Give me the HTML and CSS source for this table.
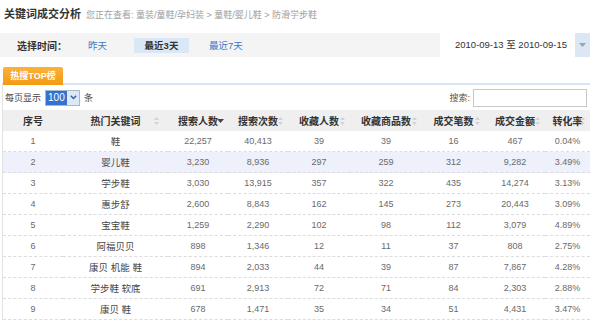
FILE: index.html
```html
<!DOCTYPE html>
<html lang="zh-CN">
<head>
<meta charset="utf-8">
<title>关键词成交分析</title>
<link rel="stylesheet" href="styles.css">
</head>
<body>
<div class="page">
  <div class="title">关键词成交分析<span class="crumb">您正在查看: 童装/童鞋/孕妇装 &gt; 童鞋/婴儿鞋 &gt; 防滑学步鞋</span></div>
  <div class="filter">
    <span class="flabel">选择时间：</span>
    <span class="flink">昨天</span>
    <span class="factive">最近3天</span>
    <span class="flink">最近7天</span>
    <div class="date">
      <span class="date-text">2010-09-13 至 2010-09-15</span>
      <span class="date-arrow"><svg width="7" height="4" viewBox="0 0 7 4"><path d="M0 0h7L3.5 4z" fill="#9aa3ad"/></svg></span>
    </div>
  </div>
  <div class="tabs"><span class="tab">热搜TOP榜</span></div>
  <div class="panel">
    <div class="toolbar">
      <div class="perpage">每页显示
        <span class="select"><span class="sel-val">100</span><span class="sel-arrow"><svg width="7" height="5" viewBox="0 0 7 5"><path d="M0.8 0.8L3.5 3.6L6.2 0.8" fill="none" stroke="#2d5fa8" stroke-width="1.4"/></svg></span></span>
        条</div>
      <div class="search">搜索:<span class="search-input"></span></div>
    </div>
    <table class="grid">
      <colgroup>
        <col class="c1"><col class="c2"><col class="c3"><col class="c4"><col class="c5"><col class="c6"><col class="c7"><col class="c8"><col class="c9">
      </colgroup>
      <thead>
        <tr>
          <th>序号</th>
          <th class="sortable kw">热门关键词<svg class="sort" width="5" height="8" viewBox="0 0 5 8"><path d="M2.5 0L5 3H0z M2.5 8L0 5h5z" fill="#d3d3d3"/></svg></th>
          <th class="sortable">搜索人数<svg class="sort down" width="7" height="4" viewBox="0 0 7 4"><path d="M0 0h7L3.5 4z" fill="#444"/></svg></th>
          <th class="sortable">搜索次数<svg class="sort" width="5" height="8" viewBox="0 0 5 8"><path d="M2.5 0L5 3H0z M2.5 8L0 5h5z" fill="#d3d3d3"/></svg></th>
          <th class="sortable">收藏人数<svg class="sort" width="5" height="8" viewBox="0 0 5 8"><path d="M2.5 0L5 3H0z M2.5 8L0 5h5z" fill="#d3d3d3"/></svg></th>
          <th class="sortable">收藏商品数<svg class="sort" width="5" height="8" viewBox="0 0 5 8"><path d="M2.5 0L5 3H0z M2.5 8L0 5h5z" fill="#d3d3d3"/></svg></th>
          <th class="sortable">成交笔数<svg class="sort" width="5" height="8" viewBox="0 0 5 8"><path d="M2.5 0L5 3H0z M2.5 8L0 5h5z" fill="#d3d3d3"/></svg></th>
          <th class="sortable">成交金额<svg class="sort" width="5" height="8" viewBox="0 0 5 8"><path d="M2.5 0L5 3H0z M2.5 8L0 5h5z" fill="#d3d3d3"/></svg></th>
          <th class="sortable">转化率<svg class="sort" width="5" height="8" viewBox="0 0 5 8"><path d="M2.5 0L5 3H0z M2.5 8L0 5h5z" fill="#d3d3d3"/></svg></th>
        </tr>
      </thead>
      <tbody>
        <tr><td>1</td><td class="kw">鞋</td><td>22,257</td><td>40,413</td><td>39</td><td>39</td><td>16</td><td>467</td><td>0.04%</td></tr>
        <tr class="hl"><td>2</td><td class="kw">婴儿鞋</td><td>3,230</td><td>8,936</td><td>297</td><td>259</td><td>312</td><td>9,282</td><td>3.49%</td></tr>
        <tr><td>3</td><td class="kw">学步鞋</td><td>3,030</td><td>13,915</td><td>357</td><td>322</td><td>435</td><td>14,274</td><td>3.13%</td></tr>
        <tr><td>4</td><td class="kw">惠步舒</td><td>2,600</td><td>8,843</td><td>162</td><td>145</td><td>273</td><td>20,443</td><td>3.09%</td></tr>
        <tr><td>5</td><td class="kw">宝宝鞋</td><td>1,259</td><td>2,290</td><td>102</td><td>98</td><td>112</td><td>3,079</td><td>4.89%</td></tr>
        <tr><td>6</td><td class="kw">阿福贝贝</td><td>898</td><td>1,346</td><td>12</td><td>11</td><td>37</td><td>808</td><td>2.75%</td></tr>
        <tr><td>7</td><td class="kw">康贝 机能 鞋</td><td>894</td><td>2,033</td><td>44</td><td>39</td><td>87</td><td>7,867</td><td>4.28%</td></tr>
        <tr><td>8</td><td class="kw">学步鞋 软底</td><td>691</td><td>2,913</td><td>72</td><td>71</td><td>84</td><td>2,303</td><td>2.88%</td></tr>
        <tr><td>9</td><td class="kw">康贝 鞋</td><td>678</td><td>1,471</td><td>35</td><td>34</td><td>51</td><td>4,431</td><td>3.47%</td></tr>
      </tbody>
    </table>
  </div>
</div>
</body>
</html>
```

FILE: styles.css
```css
html, body {
  margin: 0;
  padding: 0;
  background: #fff;
}
body {
  width: 590px;
  height: 320px;
  overflow: hidden;
  font-family: "Liberation Sans", "Noto Sans CJK SC", sans-serif;
  color: #666;
}
.page {
  width: 590px;
}
.title {
  padding: 6px 0 0 4px;
  height: 27px;
  box-sizing: border-box;
  line-height: 16px;
  font-size: 11px;
  font-weight: bold;
  color: #333;
}
.crumb {
  font-size: 9px;
  font-weight: normal;
  color: #a0a0a0;
  margin-left: 5px;
}
.filter {
  margin-top: 6px;
  height: 24px;
  background: #f4f4f4;
  display: flex;
  align-items: center;
  font-size: 9.5px;
}
.flabel {
  margin-left: 17px;
  font-weight: bold;
  font-size: 10px;
  color: #333;
  width: 71px;
}
.flink {
  color: #3a78c8;
}
.flink + .factive {
  margin-left: 27px;
}
.factive {
  background: #d9e7f6;
  color: #333;
  font-weight: bold;
  width: 55px;
  height: 15px;
  line-height: 15px;
  text-align: center;
  margin-right: 20px;
}
.date {
  margin-left: auto;
  display: flex;
  height: 24px;
  align-items: stretch;
}
.date-text {
  background: #fff;
  width: 135px;
  padding-left: 15px;
  box-sizing: border-box;
  line-height: 24px;
  font-size: 9.5px;
  color: #333;
}
.date-arrow {
  width: 15px;
  background: #dbe7f4;
  display: flex;
  align-items: center;
  justify-content: center;
}
.tabs {
  margin-top: 8px;
  height: 18px;
  padding-left: 3px;
}
.tab {
  display: inline-block;
  width: 60px;
  height: 18px;
  line-height: 18px;
  text-align: center;
  background: linear-gradient(#fbb23a, #f39a12);
  color: #fff;
  font-size: 9px;
  font-weight: bold;
  border-radius: 2px 2px 0 0;
}
.panel {
  margin-left: 2px;
  border-left: 1px solid #e2e2e2;
  border-top: 2px solid #d6e4f3;
}
.toolbar {
  height: 25px;
  display: flex;
  align-items: center;
  justify-content: space-between;
  padding-left: 2px;
  font-size: 9px;
  color: #444;
}
.perpage {
  display: flex;
  align-items: center;
}
.select {
  display: inline-flex;
  height: 14px;
  margin: 0 4px 0 4px;
  border: 1px solid #a9b9cc;
}
.sel-val {
  background: #3372cf;
  color: #fff;
  font-size: 10px;
  line-height: 14px;
  padding: 0 2px;
  width: 17px;
}
.sel-arrow {
  width: 12px;
  background: #dce8f6;
  display: flex;
  align-items: center;
  justify-content: center;
}
.search {
  display: flex;
  align-items: center;
  color: #555;
}
.search-input {
  display: inline-block;
  width: 112px;
  height: 16px;
  margin-left: 3px;
  border: 1px solid #c8c8c8;
  background: #fff;
  margin-right: 3px;
}
.grid {
  border-collapse: collapse;
  table-layout: fixed;
  width: 587px;
}
.c1 { width: 60px; }
.c2 { width: 105px; }
.c3 { width: 60px; }
.c4 { width: 60px; }
.c5 { width: 62px; }
.c6 { width: 72px; }
.c7 { width: 63px; }
.c8 { width: 60px; }
.c9 { width: 45px; }
.grid th {
  height: 21px;
  padding: 0;
  background: #efefef;
  font-size: 10px;
  font-weight: bold;
  color: #333;
  text-align: center;
  position: relative;
  white-space: nowrap;
}
.grid th.kw {
  padding-right: 0;
}
.sort {
  position: absolute;
  right: 5px;
  top: 7px;
}
.kw .sort {
  right: 9px;
}
.sort.down {
  right: 4px;
  top: 9px;
}
.grid td {
  height: 20px;
  padding: 0;
  text-align: center;
  font-size: 9px;
  color: #6a6a6a;
  border-bottom: 1px dashed #dcdcdc;
  white-space: nowrap;
}
.grid td.kw {
  font-size: 9.5px;
  color: #444;
}
.grid tr.hl td {
  background: #eef0fb;
}
```
